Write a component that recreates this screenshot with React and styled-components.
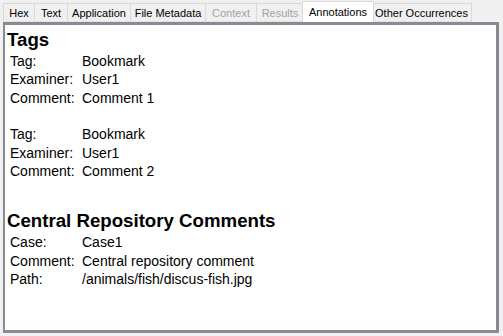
import React from "react";
import styled, { createGlobalStyle } from "styled-components";

const Global = createGlobalStyle`
  html, body { margin: 0; padding: 0; background: #f0f0f0; }
  body { width: 503px; height: 336px; overflow: hidden; font-family: "Liberation Sans", Arial, sans-serif; }
  * { box-sizing: border-box; }
`;

const Page = styled.div`
  width: 503px;
  height: 336px;
  display: flex;
  flex-direction: column;
  padding: 1px 3px 3px 3px;
  background: #f0f0f0;
`;

const TabBar = styled.div`
  display: flex;
  align-items: flex-end;
  height: 21px;
  position: relative;
  z-index: 1;
`;

const Tab = styled.div`
  width: ${(p) => p.$w}px;
  height: ${(p) => (p.$active ? 21 : 19)}px;
  margin: ${(p) => (p.$active ? "0 -2px" : "0")};
  position: relative;
  z-index: ${(p) => (p.$active ? 2 : 1)};
  display: flex;
  align-items: center;
  justify-content: center;
  padding-top: ${(p) => (p.$active ? 0 : 1)}px;
  font-family: "Liberation Sans", Arial, sans-serif;
  font-size: 11px;
  color: ${(p) => (p.$disabled ? "#a3a3a3" : "#000")};
  background: ${(p) => (p.$active ? "#ffffff" : "#f0f0f0")};
  border: 1px solid #d9d9d9;
  border-left: ${(p) => (p.$first || p.$active ? "1px solid #d9d9d9" : "none")};
  border-bottom: ${(p) => (p.$active ? "none" : "1px solid #e3e3e3")};
  white-space: nowrap;
`;

const Panel = styled.div`
  flex: 1;
  background: #ffffff;
  border: 3px solid #888b94;
  border-left-width: 2px;
  margin-right: 1px;
  padding: 4px 0 0 2px;
  display: flex;
  flex-direction: column;
`;

const Heading = styled.div`
  font-family: "Liberation Sans", Arial, sans-serif;
  font-weight: bold;
  font-size: 18.67px;
  line-height: 22px;
  color: #000;
  margin-top: ${(p) => p.$top || 0}px;
  margin-bottom: 1px;
`;

const Record = styled.div`
  display: grid;
  grid-template-columns: 72px auto;
  padding-left: 3px;
  margin-bottom: ${(p) => p.$after || 0}px;
  font-family: "Liberation Sans", Arial, sans-serif;
  font-size: 14px;
  line-height: 18.4px;
  color: #000;
`;

const Cell = styled.div`
  white-space: nowrap;
`;

const tabs = [
  { label: "Hex", w: 32 },
  { label: "Text", w: 33 },
  { label: "Application", w: 63 },
  { label: "File Metadata", w: 75 },
  { label: "Context", w: 51, disabled: true },
  { label: "Results", w: 47, disabled: true },
  { label: "Annotations", w: 72, active: true },
  { label: "Other Occurrences", w: 100 },
];

const RecordBlock = ({ rows, after }) => (
  <Record $after={after}>
    {rows.map(([k, v]) => (
      <React.Fragment key={k}>
        <Cell>{k}</Cell>
        <Cell>{v}</Cell>
      </React.Fragment>
    ))}
  </Record>
);

export default function App() {
  return (
    <>
      <Global />
      <Page>
        <TabBar>
          {tabs.map((t, i) => (
            <Tab
              key={t.label}
              $w={t.w}
              $first={i === 0}
              $active={t.active}
              $disabled={t.disabled}
            >
              {t.label}
            </Tab>
          ))}
        </TabBar>
        <Panel>
          <Heading>Tags</Heading>
          <RecordBlock
            after={18}
            rows={[
              ["Tag:", "Bookmark"],
              ["Examiner:", "User1"],
              ["Comment:", "Comment 1"],
            ]}
          />
          <RecordBlock
            rows={[
              ["Tag:", "Bookmark"],
              ["Examiner:", "User1"],
              ["Comment:", "Comment 2"],
            ]}
          />
          <Heading $top={30}>Central Repository Comments</Heading>
          <RecordBlock
            rows={[
              ["Case:", "Case1"],
              ["Comment:", "Central repository comment"],
              ["Path:", "/animals/fish/discus-fish.jpg"],
            ]}
          />
        </Panel>
      </Page>
    </>
  );
}
